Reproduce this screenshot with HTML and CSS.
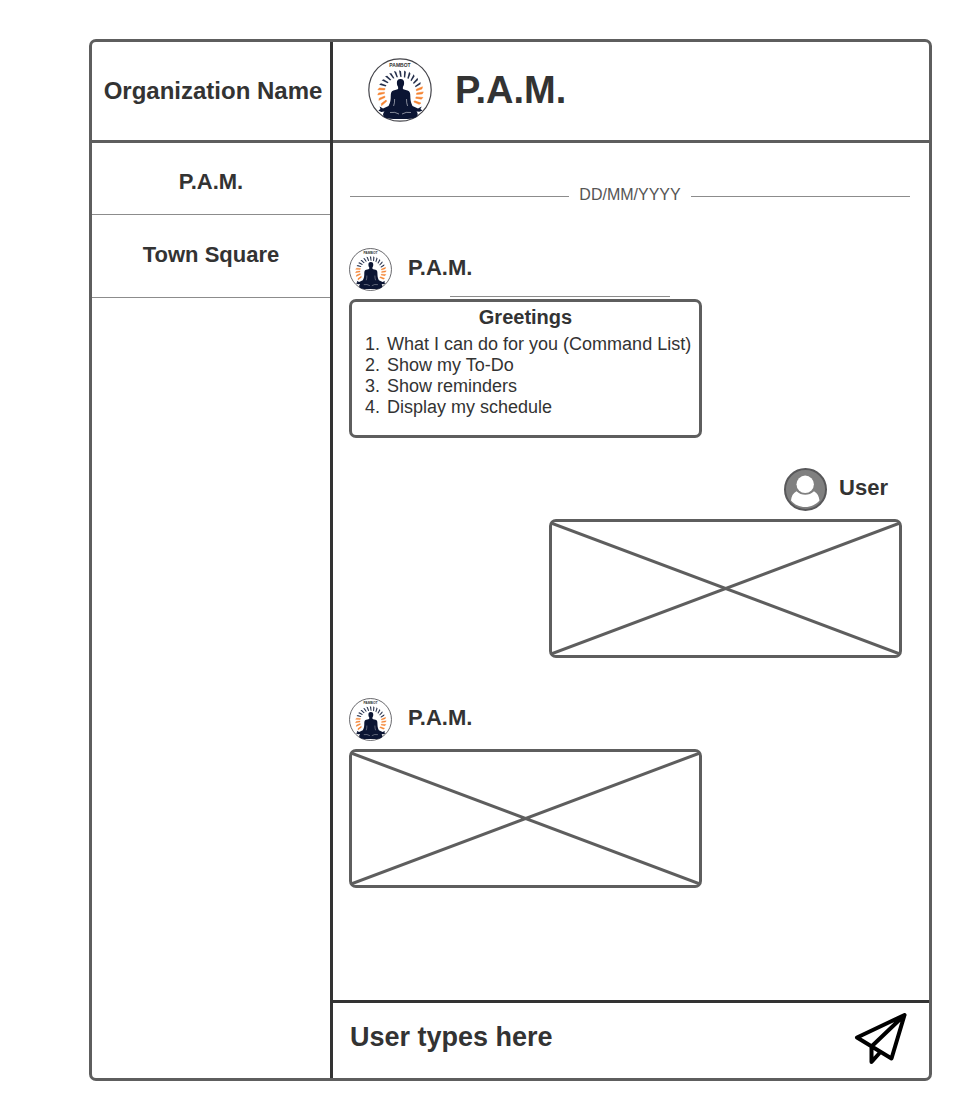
FILE: index.html
```html
<!DOCTYPE html>
<html lang="en">
<head>
<meta charset="utf-8">
<meta name="viewport" content="width=device-width, initial-scale=1">
<title>P.A.M.</title>
<link rel="stylesheet" href="styles.css">
</head>
<body>
<svg class="defs" aria-hidden="true">
  <defs>
    <path id="ray" d="M31 12.200L33 13.200L33.600 19L32.200 18.800Z"/>
    <symbol id="logo" viewBox="0 0 64 64">
      <circle cx="32" cy="32" r="31.2" fill="#fff" stroke="#44444a" stroke-width="1.2"/>
      <text class="logo-text" x="32" y="9" text-anchor="middle">PAMBOT</text>
      <g fill="#26304c">
        <use href="#ray"/>
        <use href="#ray" transform="rotate(13 32.5 35)"/>
        <use href="#ray" transform="rotate(26 32.5 35)"/>
        <use href="#ray" transform="rotate(39 32.5 35)"/>
        <use href="#ray" transform="rotate(52 32.5 35)"/>
        <use href="#ray" transform="rotate(65 32.5 35)"/>
        <use href="#ray" transform="rotate(-13 32.5 35)"/>
        <use href="#ray" transform="rotate(-26 32.5 35)"/>
        <use href="#ray" transform="rotate(-39 32.5 35)"/>
        <use href="#ray" transform="rotate(-52 32.5 35)"/>
        <use href="#ray" transform="rotate(-65 32.5 35)"/>
      </g>
      <g fill="#f5822f" stroke="#f5822f" stroke-width=".5">
        <use href="#ray" transform="rotate(78 32.5 35)"/>
        <use href="#ray" transform="rotate(91 32.5 35)"/>
        <use href="#ray" transform="rotate(105 32.5 35)"/>
        <use href="#ray" transform="rotate(120 32.5 35)"/>
        <use href="#ray" transform="rotate(-78 32.5 35)"/>
        <use href="#ray" transform="rotate(-91 32.5 35)"/>
        <use href="#ray" transform="rotate(-105 32.5 35)"/>
        <use href="#ray" transform="rotate(-120 32.5 35)"/>
      </g>
      <path fill="#0b1533" d="M32.500 21C35.300 21 36.300 23 36.100 25.200C36 27 35.500 28 34.900 28.800V31C36 32 39.500 32.200 41 33.200C42.400 34.500 42.300 37 42.400 40C42.600 43 43.200 45.500 44.500 48L50 50.500L53.800 48.600L52.400 51L54.500 52.600L51.500 53.800L48.500 53.400C50.500 55.500 50 58.400 47 59.800C44 61 38 61.200 32.500 61C27 61.200 20.500 61 17.500 59.800C14.500 58.400 14.500 55.500 16.500 53.400L13.200 54L10.400 52.600L12.400 51L11.600 48.600L15 50.500L20.500 48C22 45.500 22.500 43 22.700 40C22.800 37 22.600 34.500 24 33.200C25.500 32.200 29 32 30.100 31V28.800C29.500 28 29 27 28.900 25.200C28.700 23 29.700 21 32.500 21Z"/>
      <path fill="none" stroke="#fff" stroke-width=".5" d="M26.600 41Q26.800 45 25.600 48M38.500 41Q38.400 45 39.600 48M22 54.500Q27 53.500 31 56M43 54.500Q38 53.500 34 56"/>
    </symbol>
  </defs>
</svg>

<div class="app">
  <aside class="sidebar">
    <h2 class="org">Organization Name</h2>
    <nav class="channels" aria-label="Channels">
      <a class="channel" href="#pam">P.A.M.</a>
      <a class="channel channel-tall" href="#town-square">Town Square</a>
    </nav>
  </aside>

  <main class="chat" id="pam">
    <header class="chat-header">
      <svg class="logo-large" aria-hidden="true"><use href="#logo"/></svg>
      <h1 class="chat-title">P.A.M.</h1>
    </header>

    <section class="messages" aria-label="Messages">
      <div class="date"><time class="date-text">DD/MM/YYYY</time></div>

      <article class="message">
        <div class="sender">
          <svg class="avatar" aria-hidden="true"><use href="#logo"/></svg>
          <h3 class="name">P.A.M.</h3>
        </div>
        <hr class="rule">
        <div class="bubble greeting">
          <h4 class="greeting-title">Greetings</h4>
          <ol class="options">
            <li>What I can do for you (Command List)</li>
            <li>Show my To-Do</li>
            <li>Show reminders</li>
            <li>Display my schedule</li>
          </ol>
        </div>
      </article>

      <article class="message message-user">
        <div class="sender">
          <svg class="avatar" viewBox="0 0 43 43" aria-hidden="true">
            <circle cx="21.500" cy="21.500" r="20.500" fill="#808080" stroke="#58585a" stroke-width="2"/>
            <path fill="#fff" d="M12.500 23.200C9 25 7.300 28.500 7 32.500C10.500 36.800 15.500 39 21.200 39C27 39 32 36.500 35.500 32.500C35 28.500 33.500 25 30 23.200C25 28 17.500 28 12.500 23.200Z"/>
            <circle cx="21.200" cy="16.300" r="8.700" fill="#fff"/>
          </svg>
          <h3 class="name">User</h3>
        </div>
        <div class="bubble">
          <svg class="cross" viewBox="0 0 100 100" preserveAspectRatio="none" aria-hidden="true"><path d="M0 1L100 99M0 99L100 1"/></svg>
        </div>
      </article>

      <article class="message message-last">
        <div class="sender">
          <svg class="avatar" aria-hidden="true"><use href="#logo"/></svg>
          <h3 class="name">P.A.M.</h3>
        </div>
        <div class="bubble">
          <svg class="cross" viewBox="0 0 100 100" preserveAspectRatio="none" aria-hidden="true"><path d="M0 1L100 99M0 99L100 1"/></svg>
        </div>
      </article>
    </section>

    <form class="composer">
      <input class="composer-input" type="text" placeholder="User types here" aria-label="Message">
      <button class="send" type="button" aria-label="Send">
        <svg class="send-icon" viewBox="0 0 53 54" aria-hidden="true"><path d="M3 25.500L50.500 3L37.500 46.500ZM50.500 3L17.500 34.500V50L26 40.500"/></svg>
      </button>
    </form>
  </main>
</div>
</body>
</html>
```

FILE: styles.css
```css
* {
  box-sizing: border-box;
}

body {
  margin: 0;
  padding: 39px 38px 39px 89px;
  min-height: 100vh;
  display: flex;
  background: #fff;
  color: #333;
  font-family: "Liberation Sans", Arial, sans-serif;
}

h1, h2, h3, h4 {
  margin: 0;
}

.defs {
  position: absolute;
  width: 0;
  height: 0;
}

.logo-text {
  font-size: 5px;
  font-weight: 700;
  fill: #333;
}

.app {
  flex: 1;
  display: flex;
  border: 3px solid #5e5e5e;
  border-radius: 7px;
}

/* Sidebar */

.sidebar {
  flex: none;
  width: 241px;
  border-right: 3px solid #333;
}

.org {
  display: flex;
  align-items: center;
  justify-content: center;
  height: 101px;
  padding-left: 4px;
  border-bottom: 3px solid #5e5e5e;
  font-size: 24px;
  white-space: nowrap;
}

.channels {
  display: flex;
  flex-direction: column;
}

.channel {
  display: flex;
  align-items: center;
  justify-content: center;
  height: 72px;
  padding-top: 6px;
  border-bottom: 1px solid #8c8c8c;
  color: inherit;
  font-size: 22px;
  font-weight: 700;
  text-decoration: none;
}

.channel-tall {
  height: 83px;
  padding: 0 0 2px;
}

/* Chat */

.chat {
  flex: 1;
  min-width: 0;
  display: flex;
  flex-direction: column;
}

.chat-header {
  display: flex;
  align-items: center;
  gap: 23px;
  height: 101px;
  padding: 0 0 2px 35px;
  border-bottom: 3px solid #5e5e5e;
}

.logo-large {
  width: 64px;
  height: 64px;
}

.chat-title {
  font-size: 38px;
}

.messages {
  flex: 1;
  padding: 42px 19px 20px 16px;
}

.date {
  display: flex;
  align-items: center;
  gap: 10px;
  margin-bottom: 43px;
  padding-left: 1px;
  color: #555;
  font-size: 16px;
  line-height: 20px;
}

.date::before,
.date::after {
  content: "";
  flex: 1;
  height: 1px;
  margin-top: 3px;
  background: #8c8c8c;
}

.message {
  width: 353px;
  margin-bottom: 30px;
}

.message-user {
  margin: 0 8px 40px auto;
}

.message-last {
  margin-bottom: 0;
}

.sender {
  display: flex;
  align-items: center;
  gap: 16px;
  margin-bottom: 8px;
}

.message-user .sender {
  justify-content: flex-end;
  gap: 12px;
  padding-right: 14px;
}

.avatar {
  width: 43px;
  height: 43px;
}

.name {
  padding-bottom: 3px;
  font-size: 22px;
}

.rule {
  width: 220px;
  height: 1px;
  margin: -3px 0 2px 101px;
  border: 0;
  background: #8c8c8c;
}

.bubble {
  height: 139px;
  border: 3px solid #5e5e5e;
  border-radius: 7px;
}

.cross {
  display: block;
  width: 100%;
  height: 100%;
  fill: none;
  stroke: #5e5e5e;
  stroke-width: 3px;
}

.cross path {
  vector-effect: non-scaling-stroke;
}

.greeting {
  padding-top: 4px;
}

.greeting-title {
  margin-bottom: 5px;
  font-size: 20px;
  line-height: 23px;
  text-align: center;
}

.options {
  margin: 0;
  padding: 0 0 0 13px;
  font-size: 18px;
  line-height: 21px;
  list-style: none;
  counter-reset: option;
  white-space: nowrap;
}

.options li {
  display: flex;
  gap: 7px;
  counter-increment: option;
}

.options li::before {
  content: counter(option) ".";
}

/* Composer */

.composer {
  display: flex;
  align-items: center;
  height: 78px;
  padding: 0 22px 3px 17px;
  border-top: 3px solid #333;
}

.composer-input {
  flex: 1;
  min-width: 0;
  padding: 0 0 4px;
  border: 0;
  outline: 0;
  background: none;
  color: #333;
  font: 700 27px "Liberation Sans", Arial, sans-serif;
}

.composer-input::placeholder {
  color: #333;
  opacity: 1;
}

.send {
  padding: 0;
  border: 0;
  background: none;
  cursor: pointer;
}

.send-icon {
  display: block;
  width: 53px;
  height: 54px;
  fill: none;
  stroke: #000;
  stroke-width: 4px;
  stroke-linecap: round;
  stroke-linejoin: round;
}
```
